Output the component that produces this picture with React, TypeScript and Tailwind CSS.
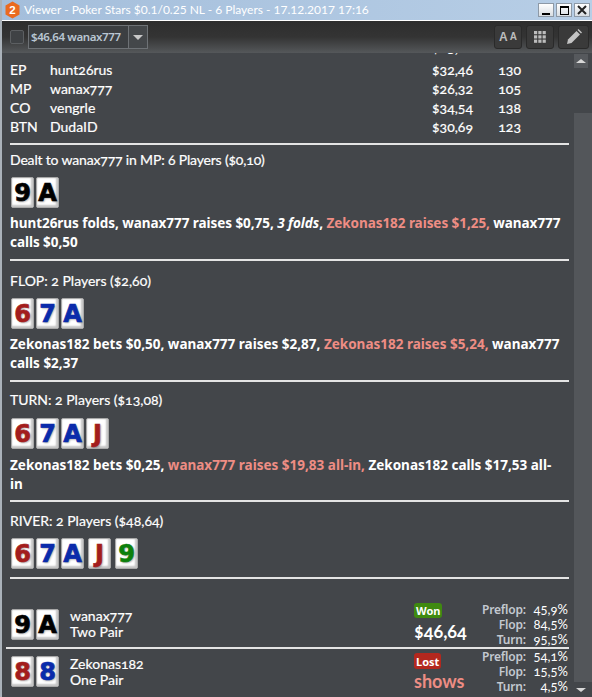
const H = "font-['Lato','Open_Sans',sans-serif] [font-feature-settings:'onum'] text-[14px] [-webkit-text-stroke:0.2px_white]";
const B = "font-['Noto_Sans','Open_Sans',sans-serif] font-bold text-[13.5px]";

type C = [string, string];
const R = "text-[#a31d1d]", U = "text-[#0a2bab]", K = "text-black", G = "text-[#0c800c]";

function Card({ c }: { c: C }) {
  return (
    <div className="w-[23px] h-[31px] rounded-[2px] bg-white border border-[#a8a8a8] shadow-[inset_-2px_-2px_2px_#c4c4c4,inset_1px_1px_1px_#efefef] flex items-center justify-center overflow-hidden">
      <span className={`font-['DejaVu_Sans',sans-serif] font-bold text-[24px] leading-none [-webkit-text-stroke:0.7px_currentColor] [text-shadow:1px_1px_2px_rgba(0,0,0,0.35)] ${c[1]}`}>{c[0]}</span>
    </div>
  );
}

function Cards({ cards }: { cards: C[] }) {
  return (
    <div className="flex gap-[2px]">
      {cards.map((c, i) => <Card key={i} c={c} />)}
    </div>
  );
}

function Hr({ cls = "" }: { cls?: string }) {
  return <div className={`h-[2px] bg-[#e4e4e4] ${cls}`} />;
}

function Row({ p, n, m, b }: { p: string; n: string; m: string; b: string }) {
  return (
    <div className={`flex h-[19px] items-center text-white ${H}`}>
      <div className="w-[40px]">{p}</div>
      <div className="w-[359px]">{n}</div>
      <div className="w-[64px] text-right">{m}</div>
      <div className="w-[48px] text-right">{b}</div>
    </div>
  );
}

function Heading({ children, cls = "" }: { children: React.ReactNode; cls?: string }) {
  return <div className={`h-[19px] flex items-center text-white ${H} ${cls}`}>{children}</div>;
}

function Actions({ children, cls = "" }: { children: React.ReactNode; cls?: string }) {
  return <div className={`text-white leading-[19px] pr-[5px] ${B} ${cls}`}>{children}</div>;
}

const Hot = ({ children }: { children: React.ReactNode }) => <span className="text-[#ee8d84]">{children}</span>;

function Stats({ v }: { v: string[] }) {
  const l = ["Preflop:", "Flop:", "Turn:"];
  return (
    <div className="flex-1 pr-[4px] flex flex-col">
      {l.map((t, i) => (
        <div key={t} className="flex h-[15px] items-center justify-end text-[12px]">
          <span className="font-['Noto_Sans',sans-serif] font-semibold text-[#c3c9d0] text-right tracking-[-0.2px]">{t}</span>
          <span className="w-[42px] text-right text-white font-['Lato',sans-serif] [font-feature-settings:'onum'] text-[13px]">{v[i]}</span>
        </div>
      ))}
    </div>
  );
}

function Result({ cards, name, hand, badge, badgeCls, big, bigCls, stats, nameCls, cls = "" }: {
  cards: C[]; name: string; hand: string; badge: string; badgeCls: string; big: string; bigCls: string; stats: string[]; nameCls: string; cls?: string;
}) {
  return (
    <div className={`flex items-center h-[45px] pl-[5px] ${cls}`}>
      <Cards cards={cards} />
      <div className={`ml-[11px] text-white ${H} leading-[16px] ${nameCls}`}>
        <div>{name}</div><div>{hand}</div>
      </div>
      <div className="ml-auto w-[155px] h-[45px] flex items-start">
        <div className="w-[68px] shrink-0">
          <div className={`w-fit rounded-[3px] text-white font-['Noto_Sans',sans-serif] font-bold text-[11px] leading-[15px] px-[2px] ${badgeCls}`}>{badge}</div>
          <div className={`font-['Lato',sans-serif] [font-feature-settings:'onum'] font-bold text-[18px] leading-[22px] ${bigCls}`}>{big}</div>
        </div>
        <Stats v={stats} />
      </div>
    </div>
  );
}

export default function App() {
  return (
    <div className="w-[592px] h-[697px] overflow-hidden flex flex-col bg-[#43464a] border-l-2 border-[#aab2ba]">
      <div className="h-[20px] -ml-[2px] bg-gradient-to-r from-[#a4bedb] to-[#b7cee6] flex items-center pl-[4px] pr-[2px] shrink-0">
        <svg width="17" height="18" viewBox="0 0 17 18" className="shrink-0">
          <polygon points="8.5,0.5 15.5,4.5 15.5,13.5 8.5,17.5 1.5,13.5 1.5,4.5" fill="#ea6a1f" />
          <text x="8.5" y="13" fontSize="11.5" fontWeight="700" textAnchor="middle" fill="#fff" fontFamily="Liberation Sans">2</text>
        </svg>
        <span className="ml-[3px] text-[12px] text-white font-['Lato',sans-serif] whitespace-nowrap">Viewer - Poker Stars $0.1/0.25 NL - 6 Players - 17.12.2017 17:16</span>
        <div className="ml-auto flex gap-[2px]">
          {["min", "max", "close"].map(k => (
            <div key={k} className="w-[16px] h-[14px] border border-[#8d99a6] bg-gradient-to-b from-white to-[#d8dde2] flex items-center justify-center">
              {k === "min" && <div className="w-[8px] h-[2px] bg-black mt-[7px]" />}
              {k === "max" && <div className="w-[9px] h-[9px] border border-black border-t-2" />}
              {k === "close" && (
                <svg width="10" height="10" viewBox="0 0 10 10"><path d="M1 1L9 9M9 1L1 9" stroke="#222" strokeWidth="2" /></svg>
              )}
            </div>
          ))}
        </div>
      </div>
      <div className="h-px -ml-[2px] bg-white shrink-0" />

      <div className="h-[32px] -ml-[2px] pl-[10px] pr-[3px] shrink-0 flex items-center bg-gradient-to-b from-[#2d2d2d] via-[#343434] to-[#55585b]">
        <div className="w-[14px] h-[14px] rounded-[2px] border border-[#5c5f62] bg-[#3f4245]" />
        <div className="ml-[4px] w-[120px] h-[24px] border border-[#6e7276] flex">
          <div className="w-[100px] bg-[#3c3f42] border-r border-[#6e7276] flex items-center pl-[2px] text-[#b9c6d2] font-['Noto_Sans',sans-serif] font-semibold text-[11.5px] tracking-[-0.4px] whitespace-nowrap">$46,64 wanax777</div>
          <div className="flex-1 bg-[#44474a] flex items-center justify-center">
            <div className="w-0 h-0 border-l-[5px] border-r-[5px] border-t-[5px] border-l-transparent border-r-transparent border-t-[#c8c8c8]" />
          </div>
        </div>
        <div className="ml-auto flex gap-[4px]">
          <div className="w-[28px] h-[24px] rounded-[3px] bg-[#3a3a3a] border border-[#2a2a2a] flex items-center justify-center gap-[2px] text-[#bdbdbd] font-['Liberation_Sans',sans-serif] font-bold leading-none">
            <span className="text-[12px]">A</span><span className="text-[10px]">A</span>
          </div>
          <div className="w-[28px] h-[24px] rounded-[3px] bg-[#3a3a3a] border border-[#2a2a2a] flex items-center justify-center">
            <svg width="12" height="12" viewBox="0 0 12 12" fill="#bdbdbd">
              {[0, 4.3, 8.6].flatMap(y => [0, 4.3, 8.6].map(x => <rect key={`${x}-${y}`} x={x} y={y} width="3.2" height="3.2" />))}
            </svg>
          </div>
          <div className="w-[31px] h-[24px] rounded-[3px] bg-[#3a3a3a] border border-[#2a2a2a] flex items-center justify-center">
            <svg width="18" height="18" viewBox="0 0 18 18" fill="#c4c4c4">
              <path d="M2 16l1-4.5L11.5 3l3.5 3.5L6.5 15z" />
              <path d="M12.5 2l1-1 3.5 3.5-1 1z" />
            </svg>
          </div>
        </div>
      </div>

      <div className="flex-1 min-h-0 flex">
        <div className="flex-1 min-w-0 overflow-hidden pl-[8px] pr-[5px]">
          <div className="-mt-[15px]">
            <div className="mb-[3px]"><Row p="UTG" n="Zekonas182" m="$25,00" b="100" /></div>
            <Row p="EP" n="hunt26rus" m="$32,46" b="130" />
            <Row p="MP" n="wanax777" m="$26,32" b="105" />
            <Row p="CO" n="vengrle" m="$34,54" b="138" />
            <Row p="BTN" n="DudaID" m="$30,69" b="123" />
          </div>
          <Hr cls="mt-[7px]" />
          <div className="mt-[5px]"><Heading cls="tracking-[-0.17px]">Dealt to wanax777 in MP: 6 Players ($0,10)</Heading></div>
          <div className="mt-[8px] pl-[1px]"><Cards cards={[["9", K], ["A", K]]} /></div>
          <div className="mt-[6px]">
            <Actions cls="tracking-[-0.05px]">hunt26rus folds, wanax777 raises $0,75, <i>3 folds</i>, <Hot>Zekonas182 raises $1,25,</Hot> wanax777 calls $0,50</Actions>
          </div>
          <Hr cls="mt-[7px]" />
          <div className="mt-[10px]"><Heading>FLOP: 2 Players ($2,60)</Heading></div>
          <div className="mt-[8px] pl-[1px]"><Cards cards={[["6", R], ["7", U], ["A", U]]} /></div>
          <div className="mt-[6px]">
            <Actions>Zekonas182 bets $0,50, wanax777 raises $2,87, <Hot>Zekonas182 raises $5,24,</Hot> wanax777 calls $2,37</Actions>
          </div>
          <Hr cls="mt-[7px]" />
          <div className="mt-[8px]"><Heading>TURN: 2 Players ($13,08)</Heading></div>
          <div className="mt-[9px] pl-[1px]"><Cards cards={[["6", R], ["7", U], ["A", U], ["J", R]]} /></div>
          <div className="mt-[7px]">
            <Actions>Zekonas182 bets $0,25, <Hot>wanax777 raises $19,83 all-in,</Hot> Zekonas182 calls $17,53 all-in</Actions>
          </div>
          <Hr cls="mt-[6px]" />
          <div className="mt-[9px]"><Heading>RIVER: 2 Players ($48,64)</Heading></div>
          <div className="mt-[8px] pl-[1px]">
            <div className="flex gap-[2px]">
              <Card c={["6", R]} /><Card c={["7", U]} /><Card c={["A", U]} />
              <div className="ml-[2px]"><Card c={["J", R]} /></div>
              <div className="ml-[2px]"><Card c={["9", G]} /></div>
            </div>
          </div>
          <Hr cls="mt-[8px]" />

          <div className="-ml-[4px]">
            <Result cls="mt-[23px]" nameCls="-mt-[2px]" cards={[["9", K], ["A", K]]} name="wanax777" hand="Two Pair" badge="Won" badgeCls="mt-[1px] bg-[#3f8a10]" big="$46,64" bigCls="mt-[2px] text-white" stats={["45,9%", "84,5%", "95,5%"]} />
            <Hr />
            <Result nameCls="mt-[1px]" cards={[["8", R], ["8", U]]} name="Zekonas182" hand="One Pair" badge="Lost" badgeCls="mt-[4px] py-[0.5px] bg-[#b3281e]" big="shows" bigCls="mt-[1px] text-[#ee8d84]" stats={["54,1%", "15,5%", "4,5%"]} />
          </div>
        </div>

        <div className="w-[18px] shrink-0 flex flex-col">
          <div className="w-[14px] h-[14px] mt-[1px] bg-[#56595d] flex items-center justify-center">
            <div className="w-0 h-0 border-l-[5px] border-r-[5px] border-b-[4px] border-l-transparent border-r-transparent border-b-[#d8d8d8]" />
          </div>
          <div className="h-[45px]" />
          <div className="flex-1 bg-[#53565a]" />
          <div className="h-[15px] flex items-center justify-center pr-[4px]">
            <div className="w-0 h-0 border-l-[5px] border-r-[5px] border-t-[4px] border-l-transparent border-r-transparent border-t-[#d8d8d8]" />
          </div>
        </div>
      </div>
    </div>
  );
}
